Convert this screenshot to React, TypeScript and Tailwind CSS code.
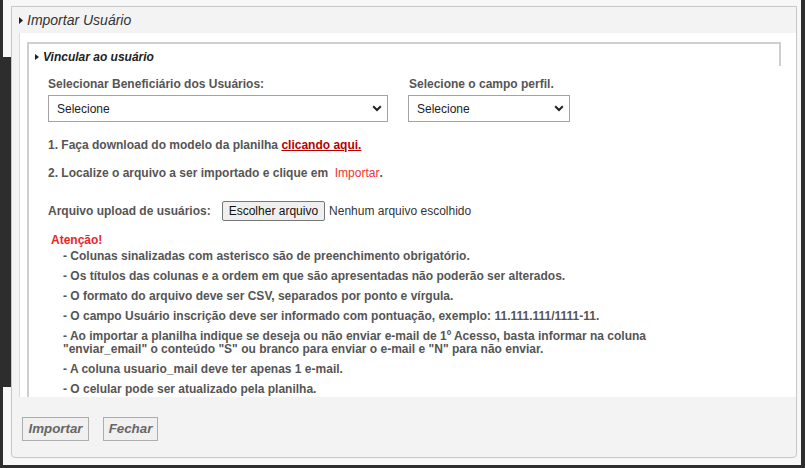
import React from "react";

function Chevron() {
  return (
    <svg width="10" height="7" viewBox="0 0 10 7" className="shrink-0">
      <path d="M1.2 1.2 L5 5 L8.8 1.2" fill="none" stroke="#222" strokeWidth="2" />
    </svg>
  );
}

function Tri({ size = 7 }: { size?: number }) {
  return (
    <svg width="4" height={size} viewBox={`0 0 4 ${size}`} className="shrink-0">
      <path d={`M0 0 L4 ${size / 2} L0 ${size} Z`} fill="#222" />
    </svg>
  );
}

function FakeSelect({ w }: { w: string }) {
  return (
    <div className={`${w} h-[27px] border border-[#a3a3a3] bg-white flex items-center justify-between pl-[8px] pr-[5px] text-[12px] font-normal text-[#222]`}>
      <span>Selecione</span>
      <Chevron />
    </div>
  );
}

const items: React.ReactNode[] = [
  "- Colunas sinalizadas com asterisco são de preenchimento obrigatório.",
  "- Os títulos das colunas e a ordem em que são apresentadas não poderão ser alterados.",
  "- O formato do arquivo deve ser CSV, separados por ponto e vírgula.",
  "- O campo Usuário inscrição deve ser informado com pontuação, exemplo: 11.111.111/1111-11.",
  <>
    - Ao importar a planilha indique se deseja ou não enviar e-mail de 1º Acesso, basta informar na coluna
    <br />
    "enviar_email" o conteúdo "S" ou branco para enviar o e-mail e "N" para não enviar.
  </>,
  "- A coluna usuario_mail deve ter apenas 1 e-mail.",
  "- O celular pode ser atualizado pela planilha.",
];

export default function App() {
  return (
    <div className="relative w-[805px] h-[468px] bg-[#2d2d2d] overflow-hidden pl-[3px] pr-[4px] pb-[3px] font-['Liberation_Sans',Arial,sans-serif]">
      <div className="relative h-full bg-[#f7f7f7] pl-[8px] pt-[6px] pr-[4px]">
        <div className="absolute left-0 top-[57px] w-[8px] h-[330px] bg-[#2d2d2d]" />
        <div className="relative w-[786px] h-[452px] border border-[#c6c6c6] rounded-b-[4px] bg-[#f3f3f3] flex flex-col overflow-hidden">
          {/* Header */}
          <div className="h-[26px] shrink-0 flex items-center pl-[7px] gap-[4px]">
            <Tri />
            <span className="italic text-[14px] text-[#333] leading-none">Importar Usuário</span>
          </div>
          {/* Body */}
          <div className="ml-[7px] h-[364px] shrink-0 border-l border-[#dcdcdc] bg-white pl-[7px] pt-[9px] overflow-hidden flex flex-col">
            <div className="flex-1 border-l-2 border-[#cfcfcf] flex flex-col">
              <div className="w-[752px] h-[24px] border-t-2 border-r-2 border-[#cfcfcf] flex items-center pl-[6px] pt-[3px] gap-[4px]">
                <Tri size={6} />
                <span className="italic font-bold text-[12px] text-[#222] leading-none">Vincular ao usuário</span>
              </div>
              <div className="pl-[19px] text-[12px] font-bold text-[#555] leading-[14px]">
                <div className="mt-[11px] flex gap-[20px]">
                  <div className="flex flex-col gap-[4px]">
                    <span>Selecionar Beneficiário dos Usuários:</span>
                    <FakeSelect w="w-[340px]" />
                  </div>
                  <div className="flex flex-col gap-[4px]">
                    <span className="pl-[1px]">Selecione o campo perfil.</span>
                    <FakeSelect w="w-[162px]" />
                  </div>
                </div>
                <p className="mt-[16px]">
                  1. Faça download do modelo da planilha{" "}
                  <a className="text-[#b80000] underline">clicando aqui.</a>
                </p>
                <p className="mt-[14px]">
                  2. Localize o arquivo a ser importado e clique em&nbsp;{" "}
                  <span className="font-normal text-[#ee3333]">Importar</span>.
                </p>
                <div className="mt-[21px] h-[20px] flex items-center">
                  <span>Arquivo upload de usuários:</span>
                  <button className="ml-[11px] h-[20px] px-[6px] border border-[#767676] rounded-[2px] bg-[#efefef] text-[12px] font-normal text-[#111] leading-none">
                    Escolher arquivo
                  </button>
                  <span className="ml-[4px] text-[12px] font-normal text-[#333]">Nenhum arquivo escolhido</span>
                </div>
                <p className="mt-[12px] ml-[3px] text-[#e8262a]">Atenção!</p>
                <ul className="mt-[3px] pl-[15px] leading-[13px]">
                  {items.map((t, i) => (
                    <li key={i} className="mb-[7px]">{t}</li>
                  ))}
                </ul>
              </div>
            </div>
          </div>
          {/* Footer */}
          <div className="pt-[20px] pl-[10px] flex gap-[14px]">
            <button className="w-[67px] h-[24px] border border-[#adadad] bg-[#f0f0f0] italic font-bold text-[13.33px] text-[#666] leading-none">
              Importar
            </button>
            <button className="w-[55px] h-[24px] border border-[#adadad] bg-[#f0f0f0] italic font-bold text-[13.33px] text-[#666] leading-none">
              Fechar
            </button>
          </div>
        </div>
      </div>
    </div>
  );
}
